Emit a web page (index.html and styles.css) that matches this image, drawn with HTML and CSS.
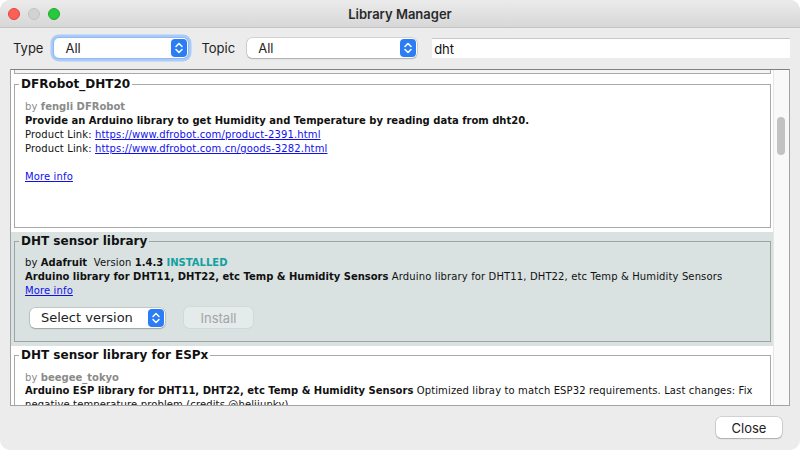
FILE: index.html
```html
<!DOCTYPE html>
<html>
<head>
<meta charset="utf-8">
<title>Library Manager</title>
<link rel="stylesheet" href="styles.css">
</head>
<body>
<div class="window">
  <header class="titlebar">
    <div class="lights">
      <span class="light red"></span>
      <span class="light grey"></span>
      <span class="light green"></span>
    </div>
    <div class="title">Library Manager</div>
    <div></div>
  </header>

  <div class="toolbar">
    <span class="lbl">Type</span>
    <div class="select sel-type focus">
      <span class="sel-text">All</span>
      <svg class="stepper" width="16" height="18" viewBox="0 0 16 18"><rect x="0" y="0" width="16" height="18" rx="4" fill="#2b7df7"/><polyline points="5,7.5 8,4.5 11,7.5" fill="none" stroke="#fff" stroke-width="1.5" stroke-linecap="round" stroke-linejoin="round"/><polyline points="5,10.5 8,13.5 11,10.5" fill="none" stroke="#fff" stroke-width="1.5" stroke-linecap="round" stroke-linejoin="round"/></svg>
    </div>
    <span class="lbl lbl-topic">Topic</span>
    <div class="select sel-topic">
      <span class="sel-text">All</span>
      <svg class="stepper" width="16" height="18" viewBox="0 0 16 18"><rect x="0" y="0" width="16" height="18" rx="4" fill="#2b7df7"/><polyline points="5,7.5 8,4.5 11,7.5" fill="none" stroke="#fff" stroke-width="1.5" stroke-linecap="round" stroke-linejoin="round"/><polyline points="5,10.5 8,13.5 11,10.5" fill="none" stroke="#fff" stroke-width="1.5" stroke-linecap="round" stroke-linejoin="round"/></svg>
    </div>
    <div class="search">dht</div>
  </div>

  <div class="listframe">
    <div class="list">
      <div class="tail"></div>

      <div class="row">
        <fieldset class="card">
          <legend>DFRobot_DHT20</legend>
          <div class="body">
            <div class="line by">by <b>fengli DFRobot</b></div>
            <div class="line"><b>Provide an Arduino library to get Humidity and Temperature by reading data from dht20.</b></div>
            <div class="line">Product Link: <a class="link">https://www.dfrobot.com/product-2391.html</a></div>
            <div class="line">Product Link: <a class="link">https://www.dfrobot.com.cn/goods-3282.html</a></div>
            <div class="line">&nbsp;</div>
            <div class="line"><a class="link">More info</a></div>
          </div>
        </fieldset>
      </div>

      <div class="row selected">
        <fieldset class="card">
          <legend>DHT sensor library</legend>
          <div class="body">
            <div class="line">by <b>Adafruit</b>&nbsp; Version <b>1.4.3</b> <b class="installed">INSTALLED</b></div>
            <div class="line"><b>Arduino library for DHT11, DHT22, etc Temp &amp; Humidity Sensors</b> Arduino library for DHT11, DHT22, etc Temp &amp; Humidity Sensors</div>
            <div class="line"><a class="link">More info</a></div>
            <div class="actions">
              <div class="select sel-version">
                <span class="sel-text">Select version</span>
                <svg class="stepper" width="16" height="18" viewBox="0 0 16 18"><rect x="0" y="0" width="16" height="18" rx="4" fill="#2b7df7"/><polyline points="5,7.5 8,4.5 11,7.5" fill="none" stroke="#fff" stroke-width="1.5" stroke-linecap="round" stroke-linejoin="round"/><polyline points="5,10.5 8,13.5 11,10.5" fill="none" stroke="#fff" stroke-width="1.5" stroke-linecap="round" stroke-linejoin="round"/></svg>
              </div>
              <button class="install" disabled>Install</button>
            </div>
          </div>
        </fieldset>
      </div>

      <div class="row">
        <fieldset class="card">
          <legend>DHT sensor library for ESPx</legend>
          <div class="body">
            <div class="line by">by <b>beegee_tokyo</b></div>
            <div class="line"><b>Arduino ESP library for DHT11, DHT22, etc Temp &amp; Humidity Sensors</b> Optimized libray to match ESP32 requirements. Last changes: Fix negative temperature problem (credits @helijunky)</div>
          </div>
        </fieldset>
      </div>
    </div>
    <div class="scrollbar"><div class="thumb"></div></div>
  </div>

  <div class="footer">
    <button class="close">Close</button>
  </div>
</div>
</body>
</html>
```

FILE: styles.css
```css
html, body {
  margin: 0;
  padding: 0;
  background: #ffffff;
}

.window {
  width: 800px;
  height: 450px;
  background: #ececec;
  border-radius: 10px;
  overflow: hidden;
  display: flex;
  flex-direction: column;
  font-family: "Inter", "Liberation Sans", sans-serif;
}

/* Title bar */
.titlebar {
  height: 27px;
  border-bottom: 1px solid #c4c4c4;
  background: linear-gradient(#ebebeb, #d7d7d7);
  display: grid;
  grid-template-columns: 1fr auto 1fr;
  align-items: center;
  flex: none;
}
.lights {
  display: flex;
  gap: 8px;
  padding-left: 8px;
}
.light {
  width: 12px;
  height: 12px;
  border-radius: 50%;
  box-sizing: border-box;
}
.light.red { background: #fe5f57; border: 0.5px solid #e0443e; }
.light.grey { background: #d2d2d2; border: 0.5px solid #c2c2c2; }
.light.green { background: #28c840; border: 0.5px solid #1aab29; }
.title {
  font-size: 13px;
  font-weight: 600;
  color: #2a2a2a;
}

/* Toolbar */
.toolbar {
  flex: none;
  display: flex;
  align-items: center;
  height: 21px;
  padding: 9px 0 11px 13px;
  font-size: 13px;
  color: #222;
}
.lbl { margin-right: 11px; }
.lbl-topic { margin-left: 13px; margin-right: 12px; }

.select {
  height: 20px;
  background: #fff;
  border-radius: 5px;
  box-shadow: 0 0 0 0.5px rgba(0,0,0,0.22), 0 1px 1.5px rgba(0,0,0,0.18);
  display: flex;
  align-items: center;
  justify-content: space-between;
  padding: 0 1px 0 11px;
  box-sizing: border-box;
  font-size: 13px;
  color: #222;
}
.select.focus {
  box-shadow: 0 0 0 1px #8db8f2, 0 0 0 3.5px #a9cbf6;
}
.sel-type { width: 134px; }
.sel-topic { width: 170px; }
.stepper { display: block; flex: none; }

.search {
  margin-left: 15px;
  width: 358px;
  height: 20px;
  background: #fff;
  box-sizing: border-box;
  border-top: 1px solid #c8c8c8;
  padding: 1px 0 0 2px;
  font-size: 13px;
  line-height: 18px;
  color: #111;
  margin-top: 1px;
}

/* List */
.listframe {
  flex: none;
  margin: 0 10px;
  height: 337px;
  box-sizing: border-box;
  border: 1px solid #a3a3a3;
  border-top-color: #808080;
  display: flex;
  background: #fff;
  overflow: hidden;
}
.list {
  width: 762px;
  flex: none;
  overflow: hidden;
  font-family: "DejaVu Sans", "Verdana", sans-serif;
  font-size: 10px;
  color: #111;
}
.tail {
  height: 3px;
  margin: 0 2px 1px 3px;
  border-bottom: 1px solid #a9a9a9;
  border-left: 1px solid #a9a9a9;
  border-right: 1px solid #a9a9a9;
  background: #f3f5f5;
}
.row {
  padding: 1px 2px 4px 3px;
  background: #fff;
}
.row.selected {
  background: #d9e1e1;
}
.card {
  margin: 0;
  border: 1px solid #a9a9a9;
  padding: 0 0 0 4px;
  min-width: 0;
}
.row.selected .card { border-color: #9ea4a4; }
.card legend {
  padding: 0 2px;
  font-size: 12px;
  font-weight: bold;
  line-height: 16px;
  color: #111;
}
.body {
  padding: 8px 0 43px 6px;
}
.row.selected .body { padding: 7px 0 13px 6px; }
.row.selected .actions { margin-top: 9px; }
.row:last-child .body { padding-bottom: 20px; }
.row:last-child .line + .line { margin-top: -1px; }
.line {
  line-height: 14px;
  letter-spacing: 0.13px;
}
.line b { letter-spacing: 0; }
.by { color: #8a8a8a; }
.by b { color: #8a8a8a; }
.installed { color: #12a0a0; }
.link {
  color: #1010ee;
  text-decoration: underline;
}

.actions {
  display: flex;
  align-items: center;
  margin-top: 8px;
  gap: 19px;
  padding-left: 5px;
}
.sel-version { width: 135px; height: 20px; }
.install {
  width: 69px;
  height: 21px;
  border: none;
  border-radius: 5px;
  background: #e5eaea;
  box-shadow: 0 0 0 0.5px rgba(0,0,0,0.08);
  color: #a2a6a6;
  font-family: "Inter", "Liberation Sans", sans-serif;
  font-size: 13px;
  padding: 0;
}

.scrollbar {
  flex: 1;
  border-left: 1px solid #e6e6e6;
  background: #f9f9f9;
  padding: 47px 0 0 3px;
}
.thumb {
  width: 8px;
  height: 38px;
  border-radius: 4px;
  background: #c2c2c2;
}

/* Footer */
.footer {
  display: flex;
  justify-content: flex-end;
  padding: 11px 18px 0 0;
}
.close {
  width: 66px;
  height: 21px;
  border: none;
  border-radius: 5px;
  background: #fff;
  box-shadow: 0 0 0 0.5px rgba(0,0,0,0.22), 0 1px 1.5px rgba(0,0,0,0.18);
  font-family: "Inter", "Liberation Sans", sans-serif;
  font-size: 13px;
  color: #222;
  padding: 0;
}
```
